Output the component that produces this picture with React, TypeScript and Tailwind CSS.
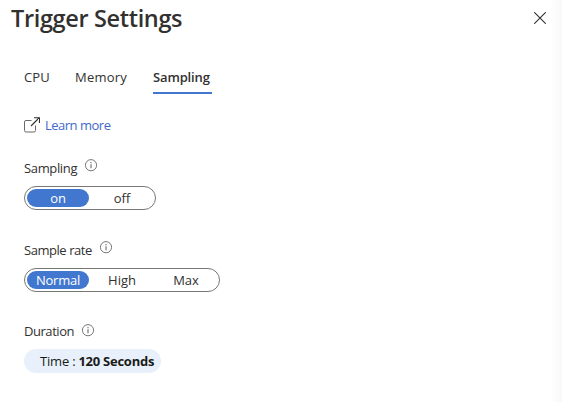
import React from 'react';

function InfoIcon() {
  return (
    <svg className="block h-[13px] w-[13px] shrink-0" viewBox="0 0 13 13" fill="none" stroke="#6b6967">
      <circle cx="6" cy="6.2" r="5.6" strokeWidth="0.9" />
      <path d="M6 5.2V9.2M6 3V4.2" strokeWidth="1.1" />
    </svg>
  );
}

function OpenIcon() {
  return (
    <svg className="block h-4 w-4 shrink-0" viewBox="0 0 16 16" fill="none">
      <path d="M7.5 3.5H2A1.5 1.5 0 0 0 .5 5V13.5A1.5 1.5 0 0 0 2 15H10A1.5 1.5 0 0 0 11.5 13.5V8.5" stroke="#6b6967" />
      <path d="M7 9L15 1M10 .8H15.5V6" stroke="#323130" strokeWidth="1.1" />
    </svg>
  );
}

const tabs = [
  { label: 'CPU', style: 'w-[51px] border-transparent tracking-[0.1px]' },
  { label: 'Memory', style: 'w-[78px] border-transparent tracking-[0.2px]' },
  { label: 'Sampling', style: 'w-[59px] border-[#4177cf] font-semibold tracking-[-0.15px]' },
];

function Toggle({ options }: { options: string[] }) {
  return (
    <div className="flex h-6 w-fit items-center rounded-full border border-[#797775] bg-white px-0.5">
      {options.map((option, index) => (
        <button
          key={option}
          className={
            index === 0
              ? 'mr-0.5 flex h-[18px] w-[62px] items-center justify-center rounded-full bg-[#4177cf] tracking-[-0.25px] text-white'
              : 'mr-0.5 flex h-[18px] w-[62px] items-center justify-center rounded-full last:mr-0'
          }
        >
          {option}
        </button>
      ))}
    </div>
  );
}

export default function App() {
  return (
    <main className="flex h-[402px] w-[562px] justify-between overflow-hidden bg-white font-['Open_Sans','Noto_Sans',sans-serif] text-[13px] leading-[18px] text-[#323130]">
      <div className="flex flex-col items-start">
        <h1 className="ml-[11px] mt-1 h-7 whitespace-nowrap text-[23.5px] font-semibold leading-7 tracking-[-0.35px]">Trigger Settings</h1>
        <div className="ml-6 flex flex-col items-start">
          <nav className="mt-9 flex h-[26px]">
            {tabs.map((tab) => (
              <button key={tab.label} className={`${tab.style} h-[26px] border-b-2 pb-1.5 text-left`}>
                {tab.label}
              </button>
            ))}
          </nav>
          <a className="mt-[22px] flex h-[18px] items-center gap-[5px] text-[#4169c9]">
            <OpenIcon />
            <span className="tracking-[-0.5px]">Learn more</span>
          </a>
          <div className="mt-[25px] flex h-[18px]">
            <span className="w-[61px] tracking-[-0.35px]">Sampling</span>
            <InfoIcon />
          </div>
          <div className="mt-[9px]"><Toggle options={['on', 'off']} /></div>
          <div className="mt-[31px] flex h-[18px]">
            <span className="w-[76px] tracking-[-0.45px]">Sample rate</span>
            <InfoIcon />
          </div>
          <div className="mt-[9px]"><Toggle options={['Normal', 'High', 'Max']} /></div>
          <div className="mt-[30px] flex h-[18px] pt-0.5">
            <span className="-mt-0.5 w-[58px] tracking-[-0.45px]">Duration</span>
            <InfoIcon />
          </div>
          <button className="mt-[9px] flex h-6 w-[137px] items-center gap-[3px] whitespace-nowrap rounded-full bg-[#e8f1fb] pl-4 text-[#1b1a19]">
            <span className="tracking-[-0.2px]">Time :</span>
            <b className="font-bold tracking-[-0.25px]">120 Seconds</b>
          </button>
        </div>
      </div>
      <div className="flex">
        <button aria-label="Close" className="mr-1 mt-3 h-3 w-3">
          <svg className="block h-3 w-3" viewBox="0 0 12 12" stroke="#323130" strokeWidth="1.1">
            <path d="M.2 .2L11.8 11.8M11.8 .2L.2 11.8" />
          </svg>
        </button>
        <div className="h-full w-3 bg-linear-to-r from-white to-[#f9f9f9]" />
      </div>
    </main>
  );
}
